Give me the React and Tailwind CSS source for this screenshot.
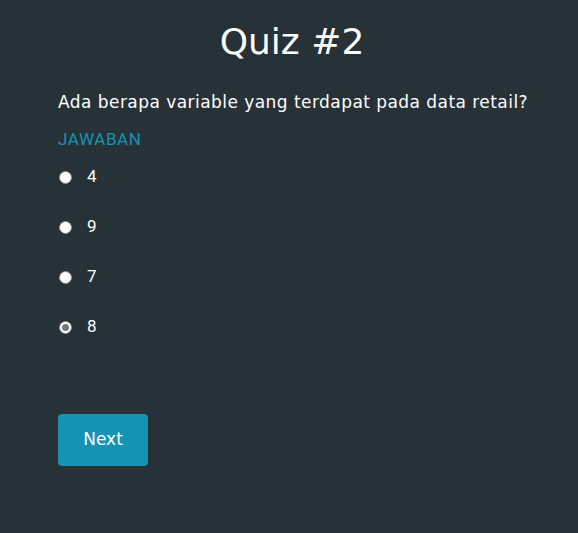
export default function App() {
  const options = ["4", "9", "7", "8"];
  return (
    <div className="min-h-[533px] w-full bg-[#263238] text-white">
      <div className="px-[58px] pt-[18px]">
        <h1 className="pl-[6px] text-center text-[36px] leading-[48px] font-['DejaVu_Sans',sans-serif] font-normal">Quiz #2</h1>
        <p className="mt-[24px] text-[17px] leading-[24px] font-['DejaVu_Sans',sans-serif] tracking-[0.45px] whitespace-nowrap">Ada berapa variable yang terdapat pada data retail?</p>
        <div className="mt-[13px] text-[17px] leading-[24px] tracking-[0.6px] text-[#1593b3] font-[Roboto,sans-serif]">JAWABAN</div>
        <div className="mt-[1px] flex flex-col">
          {options.map((o, i) => (
            <label key={o} className="flex h-[50px] items-center gap-[15px]">
              {i === 3 ? (
                <span className="ml-[1px] flex h-[13px] w-[13px] items-center justify-center rounded-full border border-[#8a8a8a] bg-white">
                  <span className="h-[7px] w-[7px] rounded-full bg-[#777]"></span>
                </span>
              ) : (
                <span className="ml-[1px] h-[13px] w-[13px] rounded-full border border-[#8a8a8a] bg-white"></span>
              )}
              <span className="text-[17px] font-[Roboto,sans-serif]">{o}</span>
            </label>
          ))}
        </div>
        <button className="mt-[62px] h-[52px] w-[90px] rounded-[4px] bg-[#1593b3] text-[17px] font-['DejaVu_Sans',sans-serif] text-white">Next</button>
      </div>
    </div>
  );
}
